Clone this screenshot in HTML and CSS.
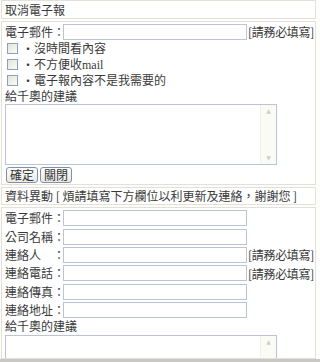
FILE: index.html
```html
<!DOCTYPE html>
<html lang="zh-Hant">
<head>
<meta charset="utf-8">
<link rel="stylesheet" href="styles.css">
</head>
<body>
<div class="panel">
  <div class="box head">取消電子報</div>
  <div class="box body1">
    <div class="row">
      <span class="label">電子郵件：</span><input class="field" type="text"><span class="req">[請務必填寫]</span>
    </div>
    <label class="check"><span class="cb"></span><span class="dot">・</span>沒時間看內容</label>
    <label class="check"><span class="cb"></span><span class="dot">・</span>不方便收mail</label>
    <label class="check"><span class="cb"></span><span class="dot">・</span>電子報內容不是我需要的</label>
    <div class="caption">給千奧的建議</div>
    <div class="areabox">
      <textarea class="area"></textarea>
      <div class="sb"><span class="arr">▲</span><span class="arr">▼</span></div>
    </div>
    <div class="buttons">
      <button class="btn">確定</button><button class="btn">關閉</button>
    </div>
  </div>
  <div class="box head head2">資料異動 [ 煩請填寫下方欄位以利更新及連絡，謝謝您 ]</div>
  <div class="box body2">
    <div class="grid">
      <div class="row"><span class="label">電子郵件：</span><input class="field" type="text"></div>
      <div class="row"><span class="label">公司名稱：</span><input class="field" type="text"></div>
      <div class="row"><span class="label">連絡人　：</span><input class="field" type="text"><span class="req">[請務必填寫]</span></div>
      <div class="row"><span class="label">連絡電話：</span><input class="field" type="text"><span class="req">[請務必填寫]</span></div>
      <div class="row"><span class="label">連絡傳真：</span><input class="field" type="text"></div>
      <div class="row"><span class="label">連絡地址：</span><input class="field" type="text"></div>
    </div>
    <div class="caption caption2">給千奧的建議</div>
    <div class="areabox short">
      <textarea class="area"></textarea>
      <div class="sb"><span class="arr">▲</span></div>
    </div>
  </div>
</div>
</body>
</html>
```
FILE: styles.css
```css
html, body {
  margin: 0;
  padding: 0;
  background: #fdfdfb;
}
body {
  font-family: "Liberation Serif", "Noto Sans CJK TC", serif;
  font-size: 12px;
  color: #3a3a3a;
  height: 362px;
  overflow: hidden;
  border-bottom: 3px solid #c9c8c2;
  box-sizing: border-box;
}
.panel {
  width: 315px;
  height: 359px;
  overflow: hidden;
  margin-left: 1px;
  display: flex;
  flex-direction: column;
  gap: 2px;
}
.box {
  border: 1px solid #e2e0d8;
  background: #fff;
  box-sizing: border-box;
}
.head {
  height: 19px;
  line-height: 18px;
  padding-left: 3px;
  font-family: "Noto Sans CJK TC", sans-serif;
  white-space: nowrap;
  overflow: hidden;
  flex: none;
}
.head2 {
  height: 18px;
  line-height: 16px;
}
.body1 {
  padding: 1px 0 1px 3px;
  flex: none;
}
.row {
  display: flex;
  align-items: center;
  height: 17px;
  white-space: nowrap;
}
.label {
  width: 58px;
  font-family: "Noto Sans CJK TC", sans-serif;
  line-height: 16px;
}
.field {
  width: 184px;
  height: 16px;
  box-sizing: border-box;
  margin: 0;
  padding: 0 2px;
  border: 1px solid #b9c5d6;
  background: #fff;
  font-size: 12px;
  outline: none;
}
.req {
  margin-left: 1px;
  font-family: "Noto Sans CJK TC", sans-serif;
  letter-spacing: -0.3px;
}
.check {
  display: flex;
  align-items: center;
  height: 16px;
  white-space: nowrap;
  font-family: "Liberation Serif", "Noto Sans CJK TC", serif;
}
.cb {
  width: 9px;
  height: 9px;
  border: 1px solid #8fa1b8;
  background: linear-gradient(135deg, #e4e4dc, #fbfbf8);
  margin-left: 2px;
  margin-right: 4px;
}
.dot {
  width: 12px;
  font-family: "Noto Sans CJK TC", sans-serif;
}
.caption {
  height: 16px;
  line-height: 16px;
  font-family: "Noto Sans CJK TC", sans-serif;
}
.areabox {
  display: flex;
  width: 272px;
  height: 61px;
  box-sizing: border-box;
  border: 1px solid #b9c5d6;
  background: #fff;
}
.areabox.short {
  height: 30px;
  margin-top: 2px;
}
.area {
  flex: 1;
  min-width: 0;
  height: 100%;
  margin: 0;
  padding: 2px;
  box-sizing: border-box;
  border: none;
  background: #fff;
  resize: none;
  overflow: hidden;
  outline: none;
}
.sb {
  width: 15px;
  display: flex;
  flex-direction: column;
  justify-content: space-between;
  align-items: center;
  background: #fbfbf6;
  border-left: 1px solid #f2f2ec;
}
.arr {
  font-family: "DejaVu Sans", sans-serif;
  font-size: 6px;
  line-height: 12px;
  color: #d0d0c8;
}
.buttons {
  display: flex;
  gap: 2px;
  margin-top: 2px;
  margin-left: 1px;
}
.btn {
  height: 16px;
  padding: 0 3px;
  margin: 0;
  border: 1px solid #7f91aa;
  border-radius: 3px;
  background: linear-gradient(#ffffff, #e8e8e2);
  font-family: "Noto Sans CJK TC", sans-serif;
  font-size: 12px;
  line-height: 14px;
  color: #333;
}
.body2 {
  padding: 1px 0 0 3px;
  flex: 1;
  min-height: 0;
  overflow: hidden;
}
.grid {
  display: grid;
  grid-auto-rows: 18.4px;
}
.grid .row {
  height: 18.4px;
}
.caption2 {
  height: 14px;
  line-height: 13px;
}
```
